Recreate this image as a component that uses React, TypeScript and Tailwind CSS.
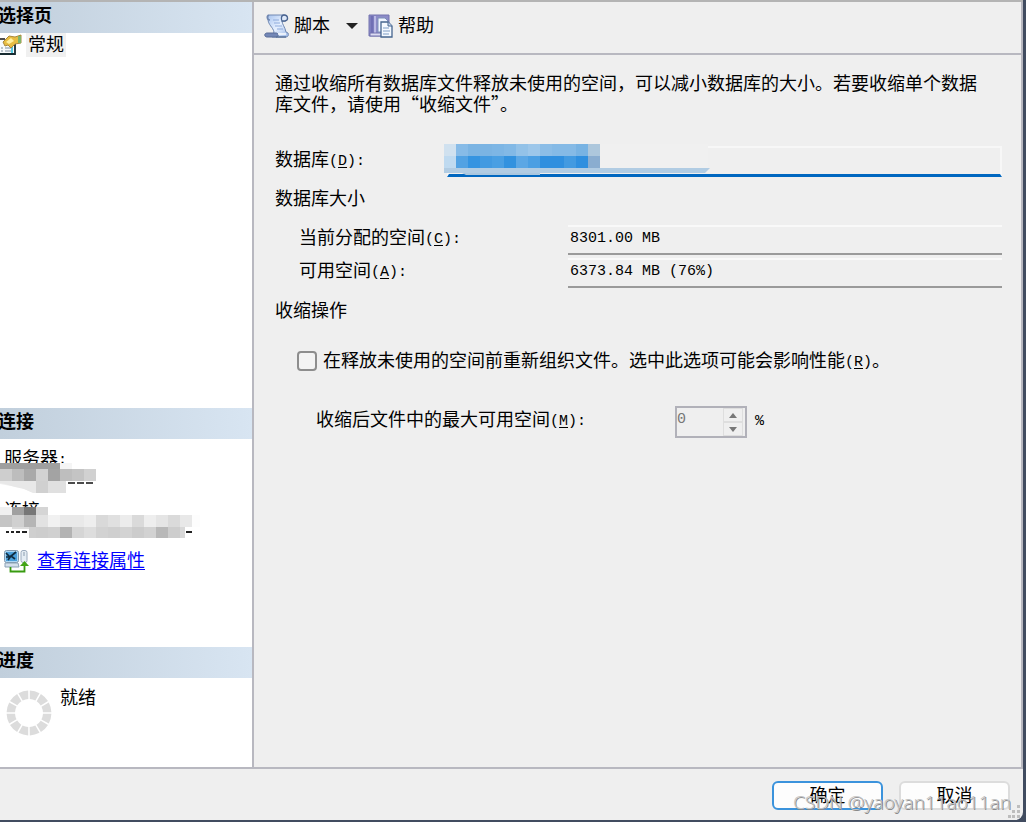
import type { ReactNode } from "react"

type Cell = [x: number, y: number, w: number, h: number, fill: string]

const row = (x: number, y: number, h: number, fills: string[]): Cell[] =>
  fills.map((fill, i) => [x + i * 12, y, 12, h, fill])

const serverCells: Cell[] = [
  [0, 0, 60, 6, "#9f9f9f"],
  [60, 0, 12, 6, "#f5f5f5"],
  ...row(0, 6, 12, ["#cecece", "#bdbdbd", "#a9a9a9", "#d2d2d2", "#a3a3a3", "#bebebe", "#c4c4c4", "#d1d1d1"]),
  [36, 18, 12, 12, "#d0d0d0"],
  [48, 18, 18, 12, "#e0e0e0"],
]

const userCells: Cell[] = [
  ...row(0, 0, 8, ["#f0f0f0", "#a0a0a0", "#777777", "#d5d5d5"]),
  ...row(0, 8, 12, [
    "#c5c5c5", "#d0d0d0", "#b5b5b5", "#e2e2e2", "#f1f1f1", "#e9e9e9", "#e9e9e9", "#eeeeee",
    "#d9d9d9", "#e0e0e0", "#ececec", "#dadada", "#eeeeee", "#e5e5e5", "#dadada", "#e8e8e8",
  ]),
  [12, 20, 24, 2, "#dddddd"],
  [29, 20, 7, 11, "#cfcfcf"],
  ...row(36, 20, 11, [
    "#cdcdcd", "#d0d0d0", "#b3b3b3", "#d5d5d5", "#dddddd", "#d2d2d2",
    "#cfcfcf", "#d3d3d3", "#cccccc", "#d2d2d2", "#b8b8b8", "#cdcdcd",
  ]),
  [180, 20, 5, 11, "#d8d8d8"],
]

const databaseCells: Cell[] = [
  ...row(0, 0, 12, [
    "#d0e1ef", "#87bbe7", "#7bb4e3", "#7bb4e3", "#7db6e5", "#82b9e6", "#93c2e8",
    "#9dc7ea", "#8bbde7", "#85bae6", "#85bae6", "#78b3e3", "#adc7dc",
  ]),
  ...row(0, 12, 12, [
    "#bfdaf0", "#52a2e3", "#3594e1", "#429ae1", "#499fe3", "#3292df", "#5ba7e5",
    "#4b9fe3", "#2f8fdf", "#2f8fdf", "#429ae1", "#2f8fdf", "#8aadd0",
  ]),
]

function Cells({ cells }: { cells: Cell[] }) {
  return cells.map(([x, y, w, h, fill]) => (
    <rect key={`${x}-${y}`} x={x} y={y} width={w} height={h} fill={fill} />
  ))
}

/* Half-width characters: 9px cells next to 18px ideographs */
function Half({ children }: { children: ReactNode }) {
  return <span className="align-[1px] font-['Liberation_Mono',monospace] text-[15px] leading-4">{children}</span>
}

function Mnemonic({ letter }: { letter: string }) {
  return (
    <Half>
      (<u className="underline-offset-2">{letter}</u>):
    </Half>
  )
}

function ScriptIcon() {
  return (
    <svg width="26" height="26" viewBox="0 0 26 26" aria-hidden="true">
      <defs>
        <linearGradient id="paper" x1="0" y1="0" x2="1" y2="1">
          <stop offset="0" stopColor="#a9c4ee" />
          <stop offset="0.5" stopColor="#e6f0ff" />
          <stop offset="1" stopColor="#9cb8e6" />
        </linearGradient>
      </defs>
      <path d="M5 2h15c4 0 5 5 1 6h-3c0 3 3 6 4 11l2 1c1 2 0 4-2 4H8l2-5C9 14 4 12 4 6c0-2 0-3 1-4z" fill="url(#paper)" stroke="#7088b2" />
      <path d="M5 2c-3 1-2 5 1 5" fill="none" stroke="#6f86b0" strokeWidth="1.4" />
      <path d="M20 2c-3 0-3 4-2 6h3c4-1 3-6-1-6z" fill="#dfe9f9" stroke="#4a6490" strokeWidth="1.3" />
      <path d="M3 20h9c3 0 3 4 0 4H3c-3 0-3-4 0-4z" fill="#7387b6" stroke="#5a6d98" />
      <path d="M12 24h10" stroke="#5a7199" strokeWidth="1.4" />
      <path d="M9 7h6M10 10h6M11 13h7M13 16h6" stroke="#8fabdb" strokeWidth="1.2" />
      <path d="M14 21h8" stroke="#fff" strokeWidth="1.4" />
    </svg>
  )
}

function HelpIcon() {
  return (
    <svg width="26" height="26" viewBox="0 0 26 26" aria-hidden="true">
      <path d="M1 2h20v21H1z" fill="#8c8cc8" stroke="#7272ae" />
      <path d="M4 3v17" stroke="#6f6fb4" strokeWidth="3" />
      <path d="M7 3v17" stroke="#b9b9e4" strokeWidth="2" />
      <path d="M2 20h15v3H2z" fill="#dcdcf2" stroke="#7272ae" />
      <path d="M10 5h7l3 3v11H10z" fill="#eef4ff" stroke="#7d90b8" />
      <path d="M13 9h7l4 4v11H13z" fill="#f4f9ff" stroke="#45658f" strokeWidth="1.3" />
      <path d="M20 9v4h4" fill="#c8d9ef" stroke="#45658f" />
      <path d="M15 15h6M15 18h7M15 21h6" stroke="#7f9dc5" strokeWidth="1.2" />
    </svg>
  )
}

function PropertiesIcon() {
  return (
    <svg width="22" height="22" viewBox="0 0 22 22" aria-hidden="true">
      <path d="M0 5h14v15H0z" fill="#f8fbfd" />
      <path d="M0 5h5" stroke="#222" strokeWidth="1.6" />
      <path d="M0 20h15V10" fill="none" stroke="#172b31" strokeWidth="1.8" />
      <path d="M12 19v-6" stroke="#55c9df" strokeWidth="2" />
      <path d="M1 14h2M5 14h6M1 17h2M5 17h6" stroke="#a6b4bf" strokeWidth="1.4" />
      <path d="M3 8l6-6 6 1 6-2v8l-6 1-4 4-3-3-3 1z" fill="#e8bd42" stroke="#a9893c" />
      <path d="M6 8l5-4 3 3-5 3z" fill="#fff0a0" />
      <path d="M18 2h3v7h-3z" fill="#80b569" />
    </svg>
  )
}

function ConnectionIcon() {
  return (
    <svg width="25" height="24" viewBox="0 0 25 24" aria-hidden="true">
      <rect x="0.5" y="1.5" width="14" height="12" rx="2" fill="#add7f3" stroke="#8097ad" />
      <path d="M2 3h11v9H2z" fill="#4ba0dc" />
      <path d="M2 4l4 4 6-5M4 11l3-4 4 3M2 8h5" fill="none" stroke="#102c40" strokeWidth="1.7" />
      <path d="M1 14h13l1 4H1z" fill="#d4e0eb" stroke="#8ba1b5" />
      <rect x="17" y="1.5" width="6" height="12" rx="2" fill="#e5edf4" stroke="#9aaabd" />
      <path d="M19 4h2M19 6h2" stroke="#899bad" />
      <path d="M6.500 18v4.500h14V15" fill="none" stroke="#389b10" strokeWidth="1.8" />
      <path d="M16 17l4.500-5 4.500 5z" fill="#43a516" />
    </svg>
  )
}

function Spinner() {
  return (
    <svg width="46" height="46" viewBox="0 0 46 46" aria-hidden="true">
      {Array.from({ length: 12 }, (_, i) => (
        <path
          key={i}
          d="M23.800 0.600A22.400 22.400 0 0 1 33.500 3.200L29.400 10.600A14 14 0 0 0 23.800 9z"
          fill="#dcdcdc"
          transform={`rotate(${i * 30} 23 23)`}
        />
      ))}
    </svg>
  )
}

function PaneHeading({ children }: { children: ReactNode }) {
  return (
    <h2 className="h-[31px] bg-linear-to-r from-[#c1cfdc] to-[#d8e5f2] font-bold leading-[29px]">
      <span className="-ml-0.5">{children}</span>
    </h2>
  )
}

function Sidebar() {
  return (
    <aside className="flex w-[254px] shrink-0 flex-col border-r-2 border-[#b8b8c0] bg-white">
      <section className="grow">
        <PaneHeading>选择页</PaneHeading>
        <a href="#general" className="flex items-center gap-1">
          <PropertiesIcon />
          <span className="bg-[#f0f0f0] px-0.5 leading-6">常规</span>
        </a>
      </section>

      <section className="h-[239px]">
        <PaneHeading>连接</PaneHeading>
        <dl className="pl-1 pt-2">
          <dt className="leading-6">
            服务器<Half>:</Half>
          </dt>
          <dd className="relative h-7">
            <svg className="absolute -left-1 -top-2" width="200" height="31" aria-hidden="true">
              <path d="M0 0h72v6h24v12H66v12H34L22 25 0 21z" fill="#efefef" />
              <Cells cells={serverCells} />
              <path d="M0 18h36v12h-3l-9-4-9-2-10-3-5-1z" fill="#e8e8e8" />
              <path d="M68 20h7M77 20h7M86 20h7" stroke="#111" strokeWidth="1.500" />
            </svg>
          </dd>
          <dt className="leading-6">
            连接<Half>:</Half>
          </dt>
          <dd className="relative h-[26px]">
            <svg className="absolute -left-1 -top-4" width="204" height="32" aria-hidden="true">
              <path d="M0 8h200v12H0z" fill="#fdfdfd" />
              <Cells cells={userCells} />
              <path d="M6 25h3M11 25h3M16 25h4M22 25h5M186 25h6" stroke="#222" strokeWidth="2" />
            </svg>
          </dd>
        </dl>
        <a href="#connection" className="flex items-center gap-2 pl-1 text-[#0000ff] underline underline-offset-2">
          <ConnectionIcon />
          查看连接属性
        </a>
      </section>

      <section className="h-[120px]">
        <PaneHeading>进度</PaneHeading>
        <div className="flex gap-2 pl-1.5 pt-2">
          <div className="pt-1">
            <Spinner />
          </div>
          <span className="leading-6">就绪</span>
        </div>
      </section>
    </aside>
  )
}

function Toolbar() {
  return (
    <div className="flex h-[53px] items-center border-b-2 border-[#b8b8c0] px-2.5 pb-1">
      <button type="button" className="flex items-center gap-1">
        <ScriptIcon />
        脚本
        <svg className="ml-3" width="12" height="6" aria-hidden="true">
          <path d="M0 0h12L6 6z" fill="#222" />
        </svg>
      </button>
      <button type="button" className="ml-2.5 flex items-center gap-1">
        <HelpIcon />
        帮助
      </button>
    </div>
  )
}

function SizeField({ id, label, letter, value }: { id: string; label: string; letter: string; value: string }) {
  return (
    <div className="flex h-[33px] items-center pl-6">
      <label htmlFor={id} className="w-[269px] shrink-0 pb-1">
        {label}
        <Mnemonic letter={letter} />
      </label>
      <input
        id={id}
        readOnly
        defaultValue={value}
        className="h-[30px] min-w-0 grow border-b-2 border-t-2 border-b-[#9a9a9a] border-t-[#f9f9f9] bg-[#efefef] px-0.5 pb-0.5 font-['Liberation_Mono',monospace] text-[15px] outline-none"
      />
    </div>
  )
}

function ShrinkForm() {
  return (
    <form id="shrink" className="grow pb-6 pl-[21px] pr-[19px] pt-[17px]">
      <p className="pr-5 font-['Noto_Sans_CJK_SC',sans-serif] leading-[21px]">
        通过收缩所有数据库文件释放未使用的空间，可以减小数据库的大小。若要收缩单个数据库文件，请使用“收缩文件”。
      </p>

      <div className="mt-8 flex items-center">
        <label htmlFor="database" className="w-[172px] shrink-0 pb-1">
          数据库
          <Mnemonic letter="D" />
        </label>
        <div className="relative flex grow">
          <input
            id="database"
            readOnly
            className="h-[31px] min-w-0 grow border-2 border-b-[3px] border-[#f7f7f7] border-b-[#0067c0] bg-[#efefef] outline-none"
          />
          <svg className="absolute -left-[3px] -top-0.5" width="270" height="34" aria-hidden="true">
            <path d="M0 0h264v24H0z" fill="#f0f0f0" />
            <Cells cells={databaseCells} />
            <path d="M0 24h266l-5 5H0z" fill="#b1cce3" />
            <path d="M18 29h78v2H22z" fill="#aac7df" />
          </svg>
        </div>
      </div>

      <h3 className="mt-2.5 leading-6">数据库大小</h3>
      <div className="mt-3">
        <SizeField id="allocated" label="当前分配的空间" letter="C" value="8301.00 MB" />
        <SizeField id="available" label="可用空间" letter="A" value="6373.84 MB (76%)" />
      </div>

      <h3 className="mt-2.5 leading-6">收缩操作</h3>
      <div className="mt-[26px] flex items-center gap-1.5 pl-[22px]">
        <input
          id="reorganize"
          type="checkbox"
          className="size-5 appearance-none rounded-sm border-2 border-[#8d8d8d] bg-[#f3f3f3] checked:bg-[#0067c0]"
        />
        <label htmlFor="reorganize" className="leading-6">
          在释放未使用的空间前重新组织文件。选中此选项可能会影响性能
          <Half>
            (<u className="underline-offset-2">R</u>)
          </Half>
          。
        </label>
      </div>

      <div className="mt-[33px] flex items-center pl-[41px]">
        <label htmlFor="max-free" className="w-[359px] shrink-0 pb-1">
          收缩后文件中的最大可用空间
          <Mnemonic letter="M" />
        </label>
        <div className="flex h-8 w-[72px] border-2 border-[#b1b1b9]">
          <input
            id="max-free"
            disabled
            defaultValue="0"
            className="min-w-0 grow pb-1 font-['Liberation_Mono',monospace] text-[15px] text-[#777777]"
          />
          <div className="mr-0.5 flex w-5 shrink-0 flex-col">
            <button type="button" disabled aria-label="增加" className="flex flex-1 items-center justify-center border border-[#dedede]">
              <svg width="8" height="5" aria-hidden="true">
                <path d="M0 5h8L4 0z" fill="#777" />
              </svg>
            </button>
            <button type="button" disabled aria-label="减少" className="flex flex-1 items-center justify-center border border-[#dedede]">
              <svg width="8" height="5" aria-hidden="true">
                <path d="M0 0h8L4 5z" fill="#777" />
              </svg>
            </button>
          </div>
        </div>
        <span className="ml-2 pb-1">
          <Half>%</Half>
        </span>
      </div>
    </form>
  )
}

function Footer() {
  return (
    <footer className="relative flex h-[53px] justify-end gap-4 rounded-br-lg border-t-2 border-[#b8b8c0] bg-[#efefef] pr-[13px] pt-3">
      <button type="submit" form="shrink" className="h-[29px] w-[111px] rounded-md border-2 border-[#3b93dc] bg-[#fdfdfd]">
        确定
      </button>
      <button type="button" className="h-[29px] w-[111px] rounded-md border-2 border-[#dcdcdc] bg-[#fdfdfd]">
        取消
      </button>
      <svg className="absolute bottom-0.5 right-0.5" width="13" height="13" aria-hidden="true">
        <path d="M9 0h3v3H9zM4 5h3v3H4zM9 5h3v3H9zM0 10h3v3H0zM4 10h3v3H4zM9 10h3v3H9z" fill="#bdbdbd" />
      </svg>
      <span className="pointer-events-none absolute bottom-1.5 right-3 font-['Noto_Sans',sans-serif] text-[19px] font-light leading-6 text-[#c4c4c4] [text-shadow:1px_1px_0_#8a8a8a]">
        CSDN @yaoyan11ao11an
      </span>
    </footer>
  )
}

export default function App() {
  return (
    <div className="flex min-h-screen flex-col border-b-2 border-r-3 border-[#414c60] bg-[#414c60] font-['Liberation_Sans','Noto_Sans_CJK_SC',sans-serif] text-[18px] leading-6 text-black">
      <div className="flex grow border-t-2 border-[#b4b4b4] bg-[#efefef]">
        <Sidebar />
        <main className="flex min-w-0 grow flex-col border-r-2 border-[#b8b8c0]">
          <Toolbar />
          <ShrinkForm />
        </main>
      </div>
      <Footer />
    </div>
  )
}
